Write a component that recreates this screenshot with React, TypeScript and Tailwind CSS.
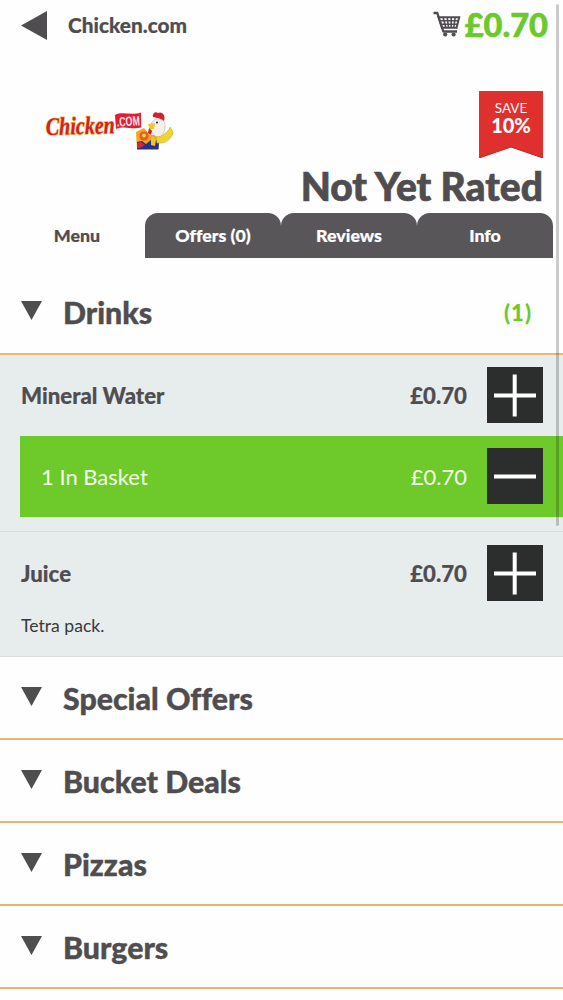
import React from "react";

function DownArrow() {
  return (
    <svg className="mr-[21px] mb-[3px] block h-[19px] w-[21px] shrink-0" viewBox="0 0 21 19">
      <path d="M0 0H21L10.5 19Z" fill="#504d50" />
    </svg>
  );
}

function CartIcon() {
  return (
    <svg className="mb-px block h-[27px] w-[28px]" viewBox="0 0 28 26" fill="none" stroke="#504d52">
      <path d="M0.5 1.5H4.3L10.3 20H24" strokeWidth="2.3" strokeLinejoin="round" />
      <path d="M5.5 5.7H26.2L23.6 16.2H9Z" strokeWidth="2" />
      <path d="M7 9.2H25M8 12.7H24M10 5.5L12.8 16M14.2 5.5L15.5 16M18.2 5.5V16M22.2 5.5L20.8 16" strokeWidth="1.6" />
      <circle cx="12.2" cy="23" r="2.1" fill="#504d52" stroke="none" />
      <circle cx="20.6" cy="23" r="2.1" fill="#504d52" stroke="none" />
    </svg>
  );
}

function Logo() {
  return (
    <svg className="block h-[46px] w-[132px]" viewBox="0 0 132 46">
      <text
        x="3"
        y="27"
        transform="rotate(-1.5 3 27)"
        textLength="69"
        lengthAdjust="spacingAndGlyphs"
        fontFamily="Liberation Serif, serif"
        fontSize="25"
        fontWeight="700"
        fontStyle="italic"
        fill="#d3201f"
        stroke="#f3c06a"
        strokeWidth="1.6"
        paintOrder="stroke"
      >
        Chicken
      </text>
      <path d="M72 7C80 3 88 8 98 4.5V19.500C89 22 82 17 73 21Z" fill="#df1d35" />
      <text
        x="74"
        y="18.500"
        textLength="23"
        lengthAdjust="spacingAndGlyphs"
        fontFamily="Liberation Sans, sans-serif"
        fontSize="13.5"
        fontWeight="700"
        fill="#ffe9ea"
        transform="rotate(-3 75 18)"
      >
        .COM
      </text>
      <path d="M93 24L101 20L107 27H117L115.500 41H94Z" fill="#f2a51f" />
      <path d="M94 34L99 33L103 36L108 32H116L115.500 41.500H94Z" fill="#2c2f86" />
      <path d="M94 35L98 34L102 37L97 40H94Z" fill="#d82a2a" />
      <path d="M108 31L110 28L113 32L112 38L108 37Z" fill="#e8c62c" />
      <path d="M109 14C113 9 121 10 122 16C122.500 21 121 26 117 29C112 30 108 25 107 20Z" fill="#f3f0ea" stroke="#b7b3ac" strokeWidth="0.6" />
      <path d="M110 9C109 5 113 3 115 5C119 3 123 7 121 13C118 10 114 10 110 9Z" fill="#d71f32" />
      <path d="M105 16L112 15L111 21L107 21Z" fill="#f2c52b" />
      <circle cx="114" cy="14.500" r="1" fill="#222" />
      <path d="M113 29C120 29 122 25 126 22L127 19L129 22L130 25C128 31 123 36 114 35Z" fill="#f0d434" stroke="#c7a92a" strokeWidth="0.6" />
      <circle cx="101" cy="28" r="4.500" fill="#e85b22" />
      <circle cx="101" cy="27.500" r="2" fill="#f8d24a" />
      <path d="M106 20L109 23L108 27L105 25Z" fill="#c5252f" />
    </svg>
  );
}

function Ribbon() {
  return (
    <div className="relative h-[67px] w-16 text-center text-white">
      <svg className="absolute inset-0 h-full w-full" viewBox="0 0 64 67">
        <path d="M0 0H64V67L32 56L0 67Z" fill="#e0302d" />
        <path d="M0 67L32 56L64 67" fill="none" stroke="#b52724" strokeWidth="1" />
      </svg>
      <div className="relative pt-[9px] text-[13.5px] leading-[16px]">SAVE</div>
      <div className="relative text-[20px] leading-[18px] font-black">10%</div>
    </div>
  );
}

function QuantityButton({ kind }: { kind: "add" | "remove" }) {
  return (
    <button className="mb-px block h-14 w-14 shrink-0 bg-[#2c2e2e]" aria-label={kind}>
      <svg className="block h-14 w-14" viewBox="0 0 56 56" stroke="#fff" strokeWidth="4">
        <path d="M7 28.500H49" />
        {kind === "add" && <path d="M27.700 7.500V49.500" />}
      </svg>
    </button>
  );
}

function Tab({ label }: { label: string }) {
  return (
    <div className="flex h-[45px] w-[136px] items-center justify-center rounded-t-[13px] bg-[#59565a] pb-px text-[17.8px] font-black text-white [-webkit-text-stroke:0.2px]">
      {label}
    </div>
  );
}

function Category({ name }: { name: string }) {
  return (
    <div className="flex h-[83px] items-center border-b-2 border-[#eab573] pl-[21px]">
      <DownArrow />
      <h2 className="text-[30.3px] leading-9 font-black [-webkit-text-stroke:0.4px]">{name}</h2>
    </div>
  );
}

export default function App() {
  return (
    <div className="relative h-[1000px] w-[563px] overflow-hidden bg-[#fefefe] font-['Lato',sans-serif] text-[#504d50] [font-variant-ligatures:none]">
      <header className="flex h-[50px] items-center pl-[21px]">
        <svg className="block h-[29px] w-[26px]" viewBox="0 0 26 29">
          <path d="M26 0V29L0 14.500Z" fill="#504d50" />
        </svg>
        <span className="ml-[21px] flex-1 pb-px text-[20.8px] font-black [-webkit-text-stroke:0.2px]">Chicken.com</span>
        <CartIcon />
        <span className="mr-[15px] ml-[4px] text-[32.6px] font-black text-[#6bc92c] [-webkit-text-stroke:0.6px]">£0.70</span>
      </header>

      <section className="flex h-[108px] items-start justify-between pt-[41px] pr-5 pl-[43px]">
        <div className="pt-[17px]">
          <Logo />
        </div>
        <Ribbon />
      </section>

      <div className="h-[55px] pt-[4px] pr-5 text-right text-[39px] leading-[48px] font-black whitespace-nowrap [-webkit-text-stroke:0.7px]">
        Not Yet Rated
      </div>

      <nav className="flex h-[45px] pl-[9px]">
        <div className="flex w-[136px] items-center justify-center pb-px text-[17.8px] font-black [-webkit-text-stroke:0.2px]">Menu</div>
        <Tab label="Offers (0)" />
        <Tab label="Reviews" />
        <Tab label="Info" />
      </nav>

      <section className="flex h-[97px] items-center border-b-2 border-[#e9b975] pt-[13px] pr-[31px] pl-[21px]">
        <DownArrow />
        <h2 className="flex-1 text-[30.3px] leading-9 font-black [-webkit-text-stroke:0.4px]">Drinks</h2>
        <span className="text-[22px] font-black tracking-[1px] text-[#6bc92c]">(1)</span>
      </section>

      <section className="h-[302px] bg-[#e7eced]">
        <div className="h-[177px] border-b border-[#d6dcdc]">
          <div className="flex h-[81px] items-center pr-5 pl-[21px] text-[22.2px] font-black [-webkit-text-stroke:0.2px]">
            <span className="flex-1">Mineral Water</span>
            <span className="mr-5">£0.70</span>
            <QuantityButton kind="add" />
          </div>
          <div className="ml-5 flex h-[81px] items-center bg-[#6ec92b] pr-5 pl-[21px] text-[22px] text-[#f4ffe9]">
            <span className="flex-1">1 In Basket</span>
            <span className="mr-5">£0.70</span>
            <QuantityButton kind="remove" />
          </div>
        </div>
        <div className="h-[125px] border-b border-[#d9dddd]">
          <div className="flex h-[82px] items-center pr-5 pl-[21px] text-[22.2px] font-black [-webkit-text-stroke:0.2px]">
            <span className="flex-1 pt-0.5">Juice</span>
            <span className="mr-5 pt-0.5">£0.70</span>
            <QuantityButton kind="add" />
          </div>
          <p className="pl-[21px] text-[17.6px] leading-6 text-[#38393a]">Tetra pack.</p>
        </div>
      </section>

      <Category name="Special Offers" />
      <Category name="Bucket Deals" />
      <Category name="Pizzas" />
      <Category name="Burgers" />

      <div className="absolute top-1 left-[556px] h-[522px] w-[3px] rounded-full bg-black/20" />
    </div>
  );
}
